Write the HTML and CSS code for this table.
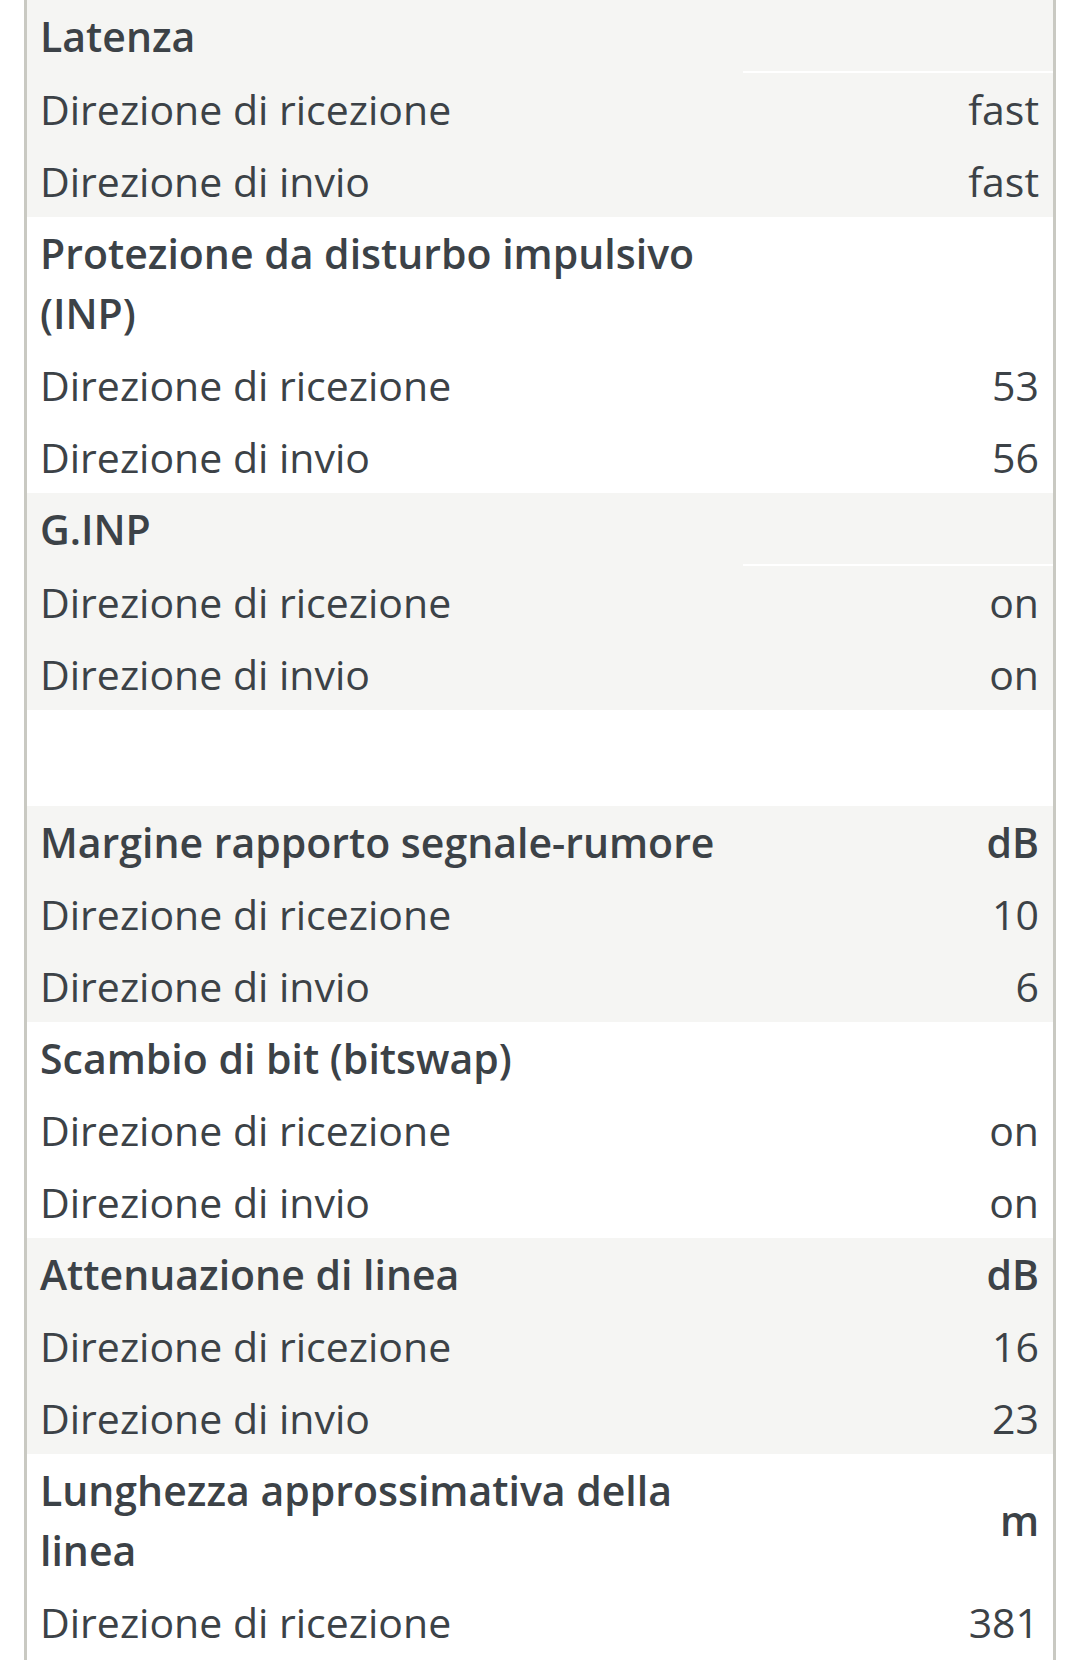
FILE: index.html
```html
<!DOCTYPE html>
<html lang="it">
<head>
<meta charset="utf-8">
<title>Dettagli linea</title>
<link rel="stylesheet" href="styles.css">
</head>
<body>
<div class="frame">
<table class="stats">
  <colgroup><col class="c-label"><col class="c-value"></colgroup>
  <tbody class="grp grey">
    <tr class="head"><th>Latenza</th><td class="unit empty"></td></tr>
    <tr><td>Direzione di ricezione</td><td class="val">fast</td></tr>
    <tr><td>Direzione di invio</td><td class="val">fast</td></tr>
  </tbody>
  <tbody class="grp">
    <tr class="head"><th>Protezione da disturbo impulsivo (INP)</th><td class="unit"></td></tr>
    <tr><td>Direzione di ricezione</td><td class="val">53</td></tr>
    <tr><td>Direzione di invio</td><td class="val">56</td></tr>
  </tbody>
  <tbody class="grp grey">
    <tr class="head"><th>G.INP</th><td class="unit empty"></td></tr>
    <tr><td>Direzione di ricezione</td><td class="val">on</td></tr>
    <tr><td>Direzione di invio</td><td class="val">on</td></tr>
  </tbody>
  <tbody class="spacer"><tr><td colspan="2"></td></tr></tbody>
  <tbody class="grp grey">
    <tr class="head"><th>Margine rapporto segnale-rumore</th><td class="unit">dB</td></tr>
    <tr><td>Direzione di ricezione</td><td class="val">10</td></tr>
    <tr><td>Direzione di invio</td><td class="val">6</td></tr>
  </tbody>
  <tbody class="grp">
    <tr class="head"><th>Scambio di bit (bitswap)</th><td class="unit"></td></tr>
    <tr><td>Direzione di ricezione</td><td class="val">on</td></tr>
    <tr><td>Direzione di invio</td><td class="val">on</td></tr>
  </tbody>
  <tbody class="grp grey">
    <tr class="head"><th>Attenuazione di linea</th><td class="unit">dB</td></tr>
    <tr><td>Direzione di ricezione</td><td class="val">16</td></tr>
    <tr><td>Direzione di invio</td><td class="val">23</td></tr>
  </tbody>
  <tbody class="grp">
    <tr class="head"><th>Lunghezza approssimativa della linea</th><td class="unit">m</td></tr>
    <tr><td>Direzione di ricezione</td><td class="val">381</td></tr>
  </tbody>
</table>
</div>
</body>
</html>
```
FILE: styles.css
```css
html, body {
  margin: 0;
  padding: 0;
  background: #ffffff;
}
body {
  font-family: "Open Sans", "Noto Sans", "Liberation Sans", sans-serif;
  color: #3c4247;
  font-size: 41px;
  line-height: 60px;
}
.frame {
  margin-left: 24px;
  width: 1026px;
  border-left: 3px solid #c9c9c2;
  border-right: 3px solid #c9c9c2;
  min-height: 1660px;
}
.stats {
  width: 100%;
  border-collapse: collapse;
  border-spacing: 0;
  table-layout: fixed;
}
.c-label { width: 716px; }
.c-value { width: 310px; }
.stats th,
.stats td {
  padding: 6px 0 6px 13px;
  vertical-align: middle;
  text-align: left;
}
.stats th {
  font-weight: 600;
}
.stats td.val,
.stats td.unit {
  text-align: right;
  padding: 6px 14px 6px 0;
}
.stats td.unit {
  font-weight: 600;
}
.grp.grey {
  background: #f5f5f3;
}
.stats td.unit.empty {
  border-bottom: 2px solid #ffffff;
}
.spacer td {
  height: 96px;
  padding: 0;
}
```
